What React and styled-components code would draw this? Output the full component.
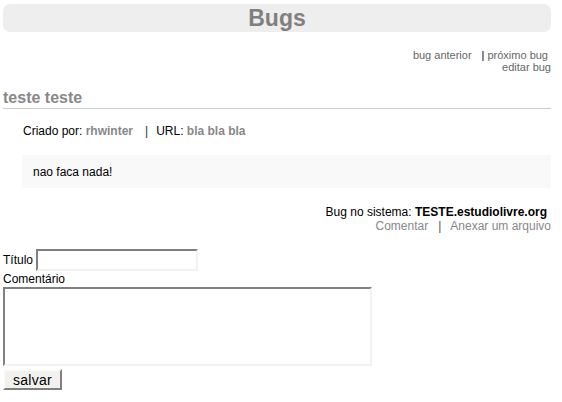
import React from "react";
import styled, { createGlobalStyle } from "styled-components";

const GlobalStyle = createGlobalStyle`
  html, body {
    margin: 0;
    padding: 0;
    background: #ffffff;
  }
  body {
    font-family: "Liberation Sans", Arial, sans-serif;
    font-size: 12px;
    color: #000000;
  }
`;

const Page = styled.div`
  width: 548px;
  margin-left: 3px;
  padding-top: 4px;
`;

const Header = styled.div`
  height: 28px;
  background: #eeeeee;
  border-radius: 7px;
  display: flex;
  align-items: center;
  justify-content: center;
`;

const HeaderTitle = styled.h1`
  margin: 0;
  font-size: 23px;
  line-height: 28px;
  font-weight: bold;
  color: #808080;
`;

const Nav = styled.div`
  margin-top: 17px;
  display: flex;
  flex-direction: column;
  align-items: flex-end;
  font-size: 11px;
  line-height: 12px;
`;

const NavLine = styled.div`
  display: flex;
  padding-right: ${(p) => (p.$inset ? "3px" : "0")};
`;

const NavLink = styled.a`
  color: #666666;
  text-decoration: none;
`;

const NavSep = styled.span`
  color: #000000;
  margin: 0 3px 0 10px;
`;

const BugTitle = styled.h2`
  margin: 15px 0 0;
  font-size: 16px;
  line-height: 20px;
  font-weight: bold;
  color: #888888;
  border-bottom: 1px solid #cccccc;
`;

const Meta = styled.div`
  margin-top: 15px;
  padding-left: 20px;
  line-height: 14px;
`;

const Strong = styled.b`
  color: #888888;
`;

const MetaSep = styled.span`
  color: #333333;
  margin: 0 8px 0 12px;
`;

const Description = styled.div`
  margin: 17px 0 0 19px;
  padding: 10px 11px 9px;
  background: #f9f9f9;
  line-height: 14px;
`;

const SystemInfo = styled.div`
  margin-top: 17px;
  display: flex;
  flex-direction: column;
  align-items: flex-end;
  line-height: 14px;
`;

const SystemLine = styled.div`
  padding-right: 4px;
  & b {
    color: #000000;
  }
`;

const ActionLine = styled.div`
  display: flex;
`;

const ActionLink = styled.a`
  color: #888888;
  text-decoration: none;
`;

const ActionSep = styled.span`
  color: #555555;
  margin: 0 9px 0 10px;
`;

const Form = styled.form`
  margin-top: 16px;
  display: flex;
  flex-direction: column;
  align-items: flex-start;
`;

const FieldRow = styled.div`
  display: flex;
  align-items: flex-end;
  gap: 3px;
`;

const Label = styled.label`
  line-height: 14px;
  margin-bottom: ${(p) => (p.$inline ? "4px" : "0")};
  margin-top: ${(p) => (p.$inline ? "0" : "1px")};
`;

const insetBorder = `
  border-style: solid;
  border-width: 2px;
  border-color: #808080 #f2f2f2 #f2f2f2 #808080;
`;

const TextInput = styled.input`
  box-sizing: border-box;
  width: 162px;
  height: 22px;
  ${insetBorder}
  background: #ffffff;
  padding: 1px 3px;
  font-family: "Liberation Sans", Arial, sans-serif;
  font-size: 12px;
  outline: none;
`;

const TextArea = styled.textarea`
  box-sizing: border-box;
  display: block;
  width: 369px;
  height: 79px;
  margin-top: 1px;
  ${insetBorder}
  background: #ffffff;
  padding: 2px;
  resize: none;
  font-family: "Liberation Sans", Arial, sans-serif;
  font-size: 12px;
  outline: none;
`;

const Button = styled.button`
  box-sizing: border-box;
  width: 59px;
  height: 21px;
  margin-top: 3px;
  padding: 0;
  background: #f3f1ed;
  border-style: solid;
  border-width: 2px;
  border-color: #fbfbfb #808080 #808080 #fbfbfb;
  font-family: "Liberation Sans", Arial, sans-serif;
  font-size: 14px;
  letter-spacing: 0.3px;
  color: #000000;
  cursor: pointer;
`;

export default function App() {
  return (
    <>
      <GlobalStyle />
      <Page>
        <Header>
          <HeaderTitle>Bugs</HeaderTitle>
        </Header>
        <Nav>
          <NavLine $inset>
            <NavLink href="#">bug anterior</NavLink>
            <NavSep>|</NavSep>
            <NavLink href="#">próximo bug</NavLink>
          </NavLine>
          <NavLine>
            <NavLink href="#">editar bug</NavLink>
          </NavLine>
        </Nav>
        <BugTitle>teste teste</BugTitle>
        <Meta>
          Criado por: <Strong>rhwinter</Strong>
          <MetaSep>|</MetaSep>
          URL: <Strong>bla bla bla</Strong>
        </Meta>
        <Description>nao faca nada!</Description>
        <SystemInfo>
          <SystemLine>
            Bug no sistema: <b>TESTE.estudiolivre.org</b>
          </SystemLine>
          <ActionLine>
            <ActionLink href="#">Comentar</ActionLink>
            <ActionSep>|</ActionSep>
            <ActionLink href="#">Anexar um arquivo</ActionLink>
          </ActionLine>
        </SystemInfo>
        <Form onSubmit={(e) => e.preventDefault()}>
          <FieldRow>
            <Label $inline>Título</Label>
            <TextInput type="text" />
          </FieldRow>
          <Label>Comentário</Label>
          <TextArea />
          <Button type="submit">salvar</Button>
        </Form>
      </Page>
    </>
  );
}
